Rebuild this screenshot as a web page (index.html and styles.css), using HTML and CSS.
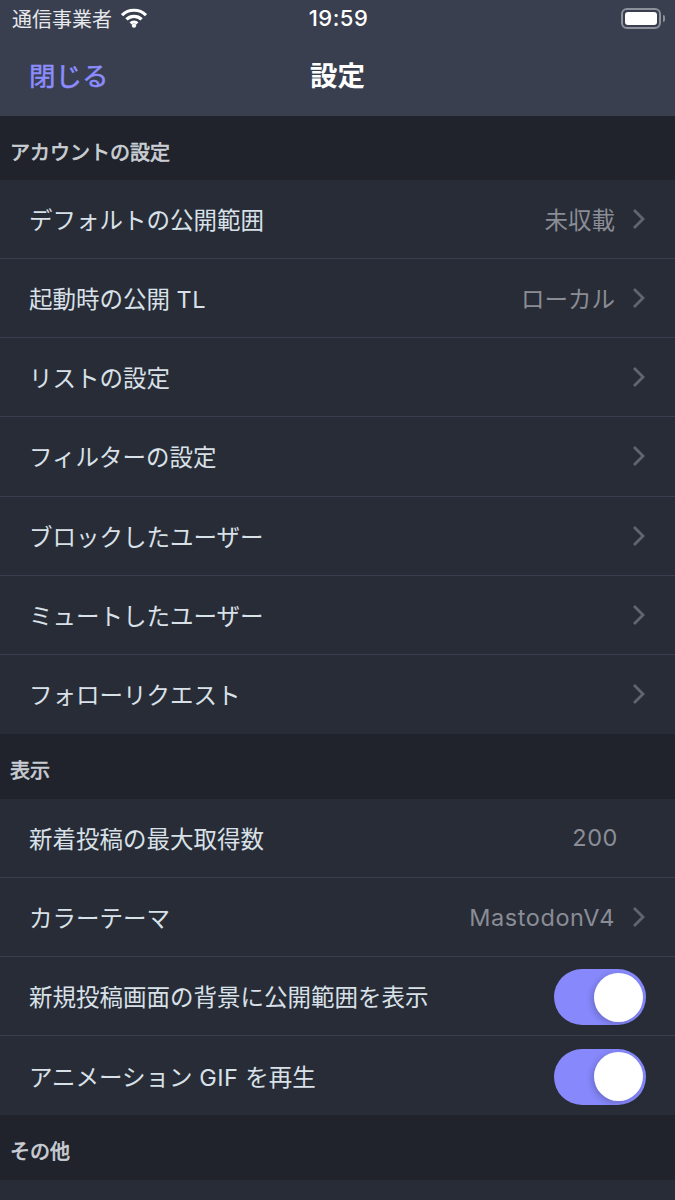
FILE: index.html
```html
<!DOCTYPE html>
<html lang="ja">
<head>
  <meta charset="UTF-8">
  <meta name="viewport" content="width=device-width, initial-scale=1.0">
  <title>設定</title>
  <link rel="stylesheet" href="styles.css">
</head>
<body>
  <header class="top">
    <div class="status">
      <div class="status-left">
        <span>通信事業者</span>
        <svg class="wifi" width="26" height="20" viewBox="0 0 26 20">
          <path d="M1 7.2a17 17 0 0 1 24 0" />
          <path d="M5.4 11.4a11 11 0 0 1 15.2 0" />
          <path d="M9.6 15.4a5 5 0 0 1 6.8 0" />
          <circle cx="13" cy="17.6" r="2.2" />
        </svg>
      </div>
      <div class="status-time">19:59</div>
      <div class="status-right">
        <div class="battery"><div class="battery-fill"></div></div>
        <div class="battery-tip"></div>
      </div>
    </div>
    <nav class="navbar">
      <a class="nav-close">閉じる</a>
      <div class="nav-title">設定</div>
    </nav>
  </header>

  <div class="section-title">アカウントの設定</div>
  <ul class="group">
    <li class="row"><span class="label">デフォルトの公開範囲</span><span class="value">未収載</span><svg class="chevron" width="14" height="22" viewBox="0 0 14 22"><path d="M2 2l9 9-9 9" /></svg></li>
    <li class="row"><span class="label">起動時の公開 <span class="latin">TL</span></span><span class="value">ローカル</span><svg class="chevron" width="14" height="22" viewBox="0 0 14 22"><path d="M2 2l9 9-9 9" /></svg></li>
    <li class="row"><span class="label">リストの設定</span><svg class="chevron" width="14" height="22" viewBox="0 0 14 22"><path d="M2 2l9 9-9 9" /></svg></li>
    <li class="row"><span class="label">フィルターの設定</span><svg class="chevron" width="14" height="22" viewBox="0 0 14 22"><path d="M2 2l9 9-9 9" /></svg></li>
    <li class="row"><span class="label">ブロックしたユーザー</span><svg class="chevron" width="14" height="22" viewBox="0 0 14 22"><path d="M2 2l9 9-9 9" /></svg></li>
    <li class="row"><span class="label">ミュートしたユーザー</span><svg class="chevron" width="14" height="22" viewBox="0 0 14 22"><path d="M2 2l9 9-9 9" /></svg></li>
    <li class="row"><span class="label">フォローリクエスト</span><svg class="chevron" width="14" height="22" viewBox="0 0 14 22"><path d="M2 2l9 9-9 9" /></svg></li>
  </ul>

  <div class="section-title">表示</div>
  <ul class="group">
    <li class="row"><span class="label">新着投稿の最大取得数</span><span class="value value-plain latin">200</span></li>
    <li class="row"><span class="label">カラーテーマ</span><span class="value latin">MastodonV4</span><svg class="chevron" width="14" height="22" viewBox="0 0 14 22"><path d="M2 2l9 9-9 9" /></svg></li>
    <li class="row"><span class="label">新規投稿画面の背景に公開範囲を表示</span><div class="switch"><div class="knob"></div></div></li>
    <li class="row"><span class="label">アニメーション <span class="latin">GIF</span> を再生</span><div class="switch"><div class="knob"></div></div></li>
  </ul>

  <div class="section-title">その他</div>
  <ul class="group">
    <li class="row"></li>
  </ul>
</body>
</html>
```

FILE: styles.css
```css
html, body {
  height: 1200px;
  overflow: hidden;
}

body {
  margin: 0;
  background-color: #20232b;
  color: #d9e1e8;
  font-family: Inter, "Noto Sans CJK JP", sans-serif;
}

.top {
  height: 116px;
  background-color: #393f4f;
  color: #fff;
}

.status {
  height: 36px;
  display: grid;
  grid-template-columns: 1fr auto 1fr;
  align-items: center;
  padding: 0 10px 0 12px;
}

.status-left {
  display: flex;
  align-items: center;
  gap: 9px;
  font-size: 20px;
  color: #e6e8ec;
}

.status-time {
  font-size: 22px;
  font-weight: 500;
  letter-spacing: 0.5px;
}

.status-right {
  display: flex;
  align-items: center;
  justify-content: flex-end;
  gap: 2px;
}

.wifi path {
  fill: none;
  stroke: #fff;
  stroke-width: 3.2;
}

.wifi circle {
  fill: #fff;
}

.battery {
  width: 40px;
  height: 21px;
  box-sizing: border-box;
  padding: 2px;
  border: 2px solid #8d919b;
  border-radius: 6px;
}

.battery-fill {
  height: 100%;
  background-color: #fff;
  border-radius: 3px;
}

.battery-tip {
  width: 2px;
  height: 7px;
  background-color: #8d919b;
  border-radius: 0 2px 2px 0;
}

.navbar {
  height: 76px;
  display: grid;
  grid-template-columns: 1fr auto 1fr;
  align-items: center;
  padding: 0 29px;
}

.nav-close {
  font-size: 26.5px;
  color: #8c8dff;
  -webkit-text-stroke: 0.5px #8c8dff;
}

.nav-title {
  font-size: 27.5px;
  font-weight: 700;
}

.section-title {
  height: 64px;
  box-sizing: border-box;
  padding: 23px 10px 0;
  font-size: 20px;
  line-height: 29px;
  color: #c9ced4;
  -webkit-text-stroke: 0.7px #c9ced4;
}

.group + .section-title {
  height: 65px;
}

.group {
  list-style: none;
  margin: 0;
  padding: 0;
  background-color: #282c37;
}

.row {
  height: 79.14px;
  box-sizing: border-box;
  display: flex;
  align-items: center;
  padding: 0 29px;
  border-bottom: 1px solid #393f4f;
  font-size: 23.5px;
}

.row:last-child {
  border-bottom: none;
}

.label {
  flex: 1;
  white-space: nowrap;
}

.latin {
  letter-spacing: 0.55px;
}

.value {
  color: #8a8d95;
  margin-right: 17px;
}

.value-plain {
  margin-right: 28px;
}

.chevron path {
  fill: none;
  stroke: #62656e;
  stroke-width: 2.8;
}

.switch {
  width: 92px;
  height: 56px;
  margin-top: 2px;
  box-sizing: border-box;
  display: flex;
  justify-content: flex-end;
  align-items: center;
  padding-right: 3px;
  background-color: #8688fc;
  border-radius: 28px;
}

.knob {
  width: 49px;
  height: 49px;
  background-color: #fff;
  border-radius: 50%;
  box-shadow: -2px 2px 6px rgba(0, 0, 0, 0.2);
}
```
